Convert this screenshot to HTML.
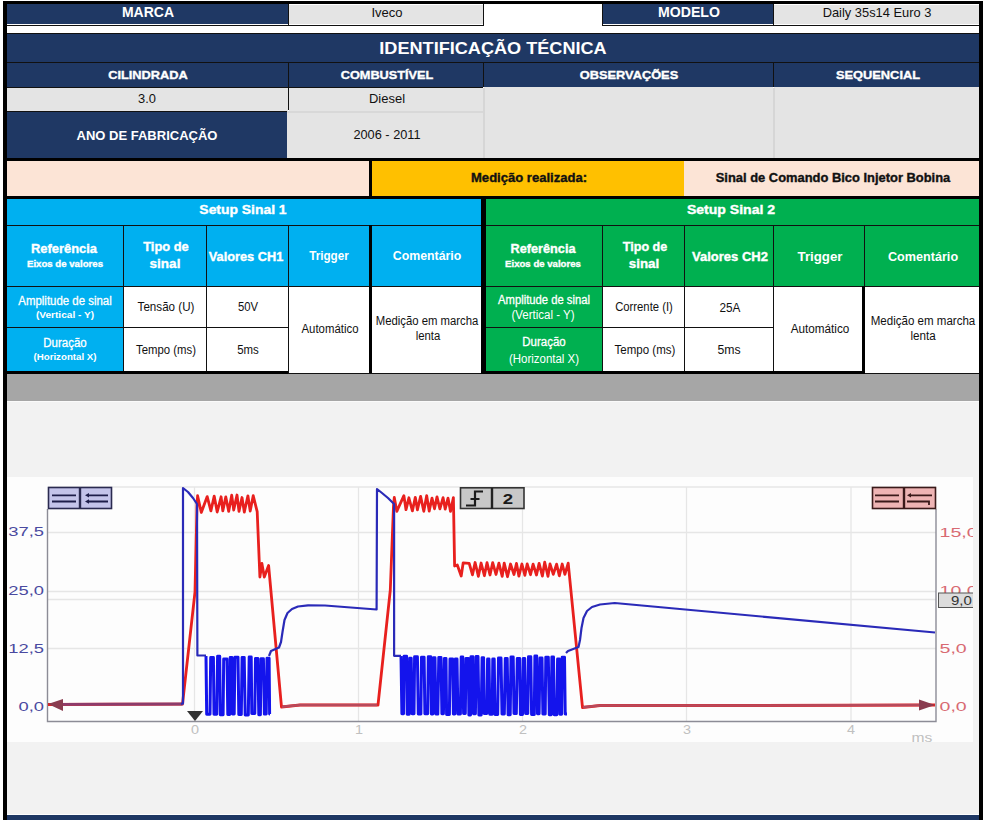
<!DOCTYPE html>
<html><head><meta charset="utf-8">
<style>
*{margin:0;padding:0;box-sizing:border-box}
html,body{width:983px;height:820px;overflow:hidden;background:#fff}
body{position:relative;font-family:"Liberation Sans",sans-serif}
.a{position:absolute}
.t{position:absolute;width:400px;text-align:center;white-space:nowrap}
</style></head><body>
<div class="a" style="left:3px;top:1px;width:980px;height:3px;background:#000"></div>
<div class="a" style="left:3px;top:1px;width:4px;height:819px;background:#000"></div>
<div class="a" style="left:979px;top:1px;width:4px;height:819px;background:#000"></div>
<div class="a" style="left:7px;top:4px;width:281px;height:20px;background:#1f3864"></div>
<div class="a" style="left:289px;top:5px;width:194px;height:19px;background:#e4e4e4"></div>
<div class="a" style="left:603px;top:4px;width:170px;height:20px;background:#1f3864"></div>
<div class="a" style="left:774px;top:5px;width:205px;height:19px;background:#e4e4e4"></div>
<div class="a" style="left:288px;top:4px;width:1px;height:22px;background:#111"></div>
<div class="a" style="left:483px;top:4px;width:1px;height:22px;background:#111"></div>
<div class="a" style="left:602px;top:4px;width:1px;height:22px;background:#111"></div>
<div class="a" style="left:773px;top:4px;width:1px;height:22px;background:#111"></div>
<div class="a" style="left:7px;top:25px;width:476px;height:1px;background:#111"></div>
<div class="a" style="left:602px;top:25px;width:377px;height:1px;background:#111"></div>
<div class="a" style="left:7px;top:33px;width:972px;height:1px;background:#111"></div>
<div class="a" style="left:7px;top:34px;width:972px;height:28px;background:#1f3864"></div>
<div class="a" style="left:7px;top:62px;width:972px;height:1px;background:#111"></div>
<div class="a" style="left:7px;top:63px;width:972px;height:24px;background:#1f3864"></div>
<div class="a" style="left:288px;top:62px;width:1px;height:48px;background:#111"></div>
<div class="a" style="left:483px;top:62px;width:1px;height:25px;background:#111"></div>
<div class="a" style="left:773px;top:62px;width:1px;height:25px;background:#111"></div>
<div class="a" style="left:7px;top:87px;width:476px;height:1px;background:#111"></div>
<div class="a" style="left:7px;top:88px;width:281px;height:23px;background:#e4e4e4"></div>
<div class="a" style="left:289px;top:88px;width:194px;height:23px;background:#e4e4e4"></div>
<div class="a" style="left:7px;top:111px;width:281px;height:1px;background:#111"></div>
<div class="a" style="left:7px;top:112px;width:280px;height:46px;background:#1f3864"></div>
<div class="a" style="left:287px;top:112px;width:196px;height:46px;background:#e4e4e4"></div>
<div class="a" style="left:484px;top:87px;width:289px;height:71px;background:#e4e4e4"></div>
<div class="a" style="left:774px;top:87px;width:205px;height:71px;background:#e4e4e4"></div>
<div class="a" style="left:483px;top:88px;width:2px;height:70px;background:#d6d6d6"></div>
<div class="a" style="left:773px;top:88px;width:2px;height:70px;background:#d6d6d6"></div>
<div class="a" style="left:287px;top:111px;width:196px;height:2px;background:#d8d8d8"></div>
<div class="a" style="left:7px;top:158px;width:972px;height:3px;background:#000"></div>
<div class="a" style="left:7px;top:161px;width:362px;height:35px;background:#fce4d6"></div>
<div class="a" style="left:369px;top:161px;width:3px;height:35px;background:#000"></div>
<div class="a" style="left:372px;top:161px;width:312px;height:35px;background:#ffc000"></div>
<div class="a" style="left:684px;top:161px;width:295px;height:35px;background:#fce4d6"></div>
<div class="a" style="left:7px;top:196px;width:972px;height:3px;background:#000"></div>
<div class="a" style="left:7px;top:199px;width:474px;height:88px;background:#00b0f0"></div>
<div class="a" style="left:486px;top:199px;width:493px;height:88px;background:#00b050"></div>
<div class="a" style="left:481px;top:196px;width:5px;height:178px;background:#000"></div>
<div class="a" style="left:7px;top:225px;width:474px;height:1px;background:#111"></div>
<div class="a" style="left:486px;top:225px;width:493px;height:1px;background:#111"></div>
<div class="a" style="left:7px;top:286px;width:474px;height:1px;background:#111"></div>
<div class="a" style="left:486px;top:286px;width:493px;height:1px;background:#111"></div>
<div class="a" style="left:7px;top:287px;width:116px;height:84px;background:#00b0f0"></div>
<div class="a" style="left:124px;top:287px;width:245px;height:86px;background:#fff"></div>
<div class="a" style="left:372px;top:287px;width:109px;height:86px;background:#fff"></div>
<div class="a" style="left:123px;top:225px;width:1px;height:148px;background:#111"></div>
<div class="a" style="left:206px;top:225px;width:1px;height:148px;background:#111"></div>
<div class="a" style="left:288px;top:225px;width:1px;height:148px;background:#111"></div>
<div class="a" style="left:369px;top:225px;width:3px;height:149px;background:#000"></div>
<div class="a" style="left:7px;top:327px;width:281px;height:1px;background:#111"></div>
<div class="a" style="left:7px;top:371px;width:281px;height:3px;background:#000"></div>
<div class="a" style="left:288px;top:373px;width:193px;height:1px;background:#111"></div>
<div class="a" style="left:486px;top:287px;width:116px;height:84px;background:#00b050"></div>
<div class="a" style="left:603px;top:287px;width:376px;height:86px;background:#fff"></div>
<div class="a" style="left:602px;top:225px;width:1px;height:148px;background:#111"></div>
<div class="a" style="left:684px;top:225px;width:1px;height:148px;background:#111"></div>
<div class="a" style="left:773px;top:225px;width:1px;height:148px;background:#111"></div>
<div class="a" style="left:864px;top:225px;width:1px;height:62px;background:#111"></div>
<div class="a" style="left:862px;top:286px;width:3px;height:88px;background:#000"></div>
<div class="a" style="left:486px;top:327px;width:287px;height:1px;background:#111"></div>
<div class="a" style="left:486px;top:371px;width:379px;height:3px;background:#000"></div>
<div class="a" style="left:865px;top:373px;width:114px;height:1px;background:#111"></div>
<div class="a" style="left:7px;top:374px;width:972px;height:27px;background:#a6a6a6"></div>
<div class="a" style="left:7px;top:401px;width:972px;height:413px;background:#f2f2f2"></div>
<div class="a" style="left:7px;top:401px;width:972px;height:1px;background:#fafafa"></div>
<div class="a" style="left:7px;top:814px;width:972px;height:1px;background:#fff"></div>
<div class="a" style="left:7px;top:815px;width:972px;height:5px;background:#1f3864"></div>
<svg class="a" style="left:0;top:0" width="983" height="820">
<rect x="7" y="477" width="966" height="265" fill="#fdfdfd"/>
<line x1="48" y1="487" x2="936" y2="487" stroke="#e6e6e6" stroke-width="1.3"/>
<line x1="48" y1="532.5" x2="936" y2="532.5" stroke="#e6e6e6" stroke-width="1.3"/>
<line x1="48" y1="591.5" x2="936" y2="591.5" stroke="#e6e6e6" stroke-width="1.3"/>
<line x1="48" y1="599.5" x2="936" y2="599.5" stroke="#e6e6e6" stroke-width="1.3"/>
<line x1="48" y1="648.5" x2="936" y2="648.5" stroke="#e6e6e6" stroke-width="1.3"/>
<line x1="194.5" y1="487" x2="194.5" y2="721" stroke="#e6e6e6" stroke-width="1.3"/>
<line x1="358.5" y1="487" x2="358.5" y2="721" stroke="#e6e6e6" stroke-width="1.3"/>
<line x1="522.5" y1="487" x2="522.5" y2="721" stroke="#e6e6e6" stroke-width="1.3"/>
<line x1="686.5" y1="487" x2="686.5" y2="721" stroke="#e6e6e6" stroke-width="1.3"/>
<line x1="851" y1="487" x2="851" y2="721" stroke="#e6e6e6" stroke-width="1.3"/>
<path d="M47.5,509 V721.5 H936 V509" fill="none" stroke="#8c8c96" stroke-width="1.4"/>
<text x="0" y="0" transform="translate(44,536) scale(1.36,1)" fill="#4a4aa0" font-family="Liberation Sans" font-size="13.5" font-weight="normal" text-anchor="end">37,5</text>
<text x="0" y="0" transform="translate(44,594.5) scale(1.36,1)" fill="#4a4aa0" font-family="Liberation Sans" font-size="13.5" font-weight="normal" text-anchor="end">25,0</text>
<text x="0" y="0" transform="translate(44,653) scale(1.36,1)" fill="#4a4aa0" font-family="Liberation Sans" font-size="13.5" font-weight="normal" text-anchor="end">12,5</text>
<text x="0" y="0" transform="translate(44,711.3) scale(1.36,1)" fill="#4a4aa0" font-family="Liberation Sans" font-size="13.5" font-weight="normal" text-anchor="end">0,0</text>
<text x="0" y="0" transform="translate(939.5,536.5) scale(1.45,1)" fill="#d86a72" font-family="Liberation Sans" font-size="13.5" font-weight="normal" text-anchor="start">15,0</text>
<text x="0" y="0" transform="translate(939.5,595) scale(1.45,1)" fill="#d86a72" font-family="Liberation Sans" font-size="13.5" font-weight="normal" text-anchor="start">10,0</text>
<text x="0" y="0" transform="translate(939.5,653) scale(1.45,1)" fill="#d86a72" font-family="Liberation Sans" font-size="13.5" font-weight="normal" text-anchor="start">5,0</text>
<text x="0" y="0" transform="translate(939.5,711) scale(1.45,1)" fill="#d86a72" font-family="Liberation Sans" font-size="13.5" font-weight="normal" text-anchor="start">0,0</text>
<rect x="938.5" y="593" width="40" height="14.5" fill="#dcdcdc" stroke="#555" stroke-width="1"/>
<text x="0" y="0" transform="translate(951,605) scale(1.2,1)" fill="#333" font-family="Liberation Sans" font-size="12.5" font-weight="normal" text-anchor="start">9,0</text>
<text x="0" y="0" transform="translate(195,734) scale(1.2,1)" fill="#c0c0c0" font-family="Liberation Sans" font-size="12" font-weight="normal" text-anchor="middle">0</text>
<text x="0" y="0" transform="translate(359,734) scale(1.2,1)" fill="#c0c0c0" font-family="Liberation Sans" font-size="12" font-weight="normal" text-anchor="middle">1</text>
<text x="0" y="0" transform="translate(523,734) scale(1.2,1)" fill="#c0c0c0" font-family="Liberation Sans" font-size="12" font-weight="normal" text-anchor="middle">2</text>
<text x="0" y="0" transform="translate(687,734) scale(1.2,1)" fill="#c0c0c0" font-family="Liberation Sans" font-size="12" font-weight="normal" text-anchor="middle">3</text>
<text x="0" y="0" transform="translate(851,734) scale(1.2,1)" fill="#c0c0c0" font-family="Liberation Sans" font-size="12" font-weight="normal" text-anchor="middle">4</text>
<text x="0" y="0" transform="translate(922,742) scale(1.3,1)" fill="#c0c0c0" font-family="Liberation Sans" font-size="12" font-weight="normal" text-anchor="middle">ms</text>
<rect x="48.5" y="487.5" width="63" height="21" fill="#c4c4ea" stroke="#2a2a50" stroke-width="1.6"/>
<line x1="80.0" y1="487" x2="80.0" y2="509" stroke="#2a2a50" stroke-width="2.4"/>
<path d="M52,495.3 H76 M52,501.5 H76 M88,495.3 H108 M88,501.5 H108" stroke="#1e1e4a" stroke-width="1.8"/>
<path d="M85,495.3 L89,493 V497.6 Z M85,501.5 L89,499.2 V503.8 Z" fill="#1e1e4a"/>
<rect x="872.5" y="487.5" width="63" height="21" fill="#eeb4b4" stroke="#3a1a1a" stroke-width="1.6"/>
<line x1="904.0" y1="487" x2="904.0" y2="509" stroke="#3a1a1a" stroke-width="2.4"/>
<path d="M875,495.3 H899 M875,501.5 H899 M910,495.3 H932 M907,501.5 H929 V505" stroke="#3a1a1a" stroke-width="1.8" fill="none"/>
<path d="M907,495.3 L911,493 V497.6 Z" fill="#3a1a1a"/>
<rect x="460.5" y="487.8" width="63.5" height="20.7" fill="#c8c8c8" stroke="#333" stroke-width="1.6"/>
<line x1="492" y1="488" x2="492" y2="509" stroke="#222" stroke-width="2.4"/>
<path d="M466,505.5 H475 V491.5 H483 M470.5,499 H479.5" stroke="#1a1a1a" stroke-width="2.2" fill="none"/>
<text x="0" y="0" transform="translate(507.8,504.3) scale(1.2,1)" fill="#1a1a1a" font-family="Liberation Sans" font-size="15.5" font-weight="bold" text-anchor="middle">2</text>
<path d="M187,711 H203 L195,721 Z" fill="#333"/>
<polyline points="48.0,704.5 182.5,704.0 195.0,592.0 197.0,505.0 197.6,495.7 201.3,512.5 207.2,496.6 210.9,510.9 214.2,496.1 217.2,512.0 221.1,496.8 222.8,510.9 225.8,496.9 228.7,511.4 231.7,495.2 233.7,510.0 237.0,495.0 239.0,511.4 242.0,497.5 244.3,512.1 247.9,495.8 250.2,511.1 253.2,495.7 257.2,511.7 259.9,577.0 261.9,563.5 264.3,577.0 268.6,565.5 281.5,707.0 300.0,705.0 378.0,705.0 390.3,590.0 393.5,506.0 394.3,497.5 396.8,511.3 403.9,495.7 406.0,509.7 408.9,497.8 412.4,510.9 415.3,497.3 417.4,509.8 420.6,496.4 423.8,511.3 426.7,495.6 429.2,511.1 432.0,498.1 434.5,508.8 437.0,496.9 439.9,508.9 443.1,497.7 445.2,509.2 448.0,498.1 450.5,511.4 453.4,497.6 454.6,566.0 457.3,565.0 461.2,576.0 463.2,562.8 469.2,563.3 472.5,574.8 475.1,562.5 478.4,576.3 481.1,563.0 484.4,575.7 487.0,562.7 490.0,575.0 492.7,562.6 496.0,574.5 498.9,563.2 502.2,576.3 504.2,563.2 507.5,576.7 510.5,564.0 514.0,574.5 516.5,563.4 518.9,576.2 521.9,564.0 524.9,575.3 527.2,563.9 530.5,574.7 533.1,564.2 536.5,575.0 539.1,563.4 542.4,576.1 544.7,562.2 548.0,576.4 550.0,563.9 553.3,574.4 556.6,564.1 559.3,575.8 562.2,564.0 564.9,574.4 568.2,563.2 582.5,707.5 600.0,705.5 760.0,705.5 935.0,705.0" fill="none" stroke="#e8201e" stroke-width="2.8" stroke-linejoin="round"/>
<polyline points="63,704.3 182.5,704" fill="none" stroke="#8c3c6c" stroke-width="2.8"/>
<polyline points="282,706.8 300,705 377,705" fill="none" stroke="#b84a5c" stroke-width="2.6"/>
<polyline points="583,707.2 600,705.5 760,705.5 920,705" fill="none" stroke="#b84a5c" stroke-width="2.6"/>
<polyline points="206.0,656.0 206.7,714.3 210.0,714.3 210.7,657.5 213.4,657.5 214.0,714.3 216.7,714.3 217.6,656.3 219.7,656.3 220.3,714.7 223.1,714.7 223.7,658.9 227.0,658.9 227.8,714.4 229.7,714.4 230.2,657.6 231.9,657.6 232.5,713.9 234.2,713.9 234.9,657.3 238.0,657.3 238.8,714.5 241.3,714.5 242.1,657.4 244.2,657.4 245.2,715.0 248.3,715.0 249.2,656.9 251.2,656.9 251.8,713.6 254.8,713.6 255.5,658.5 257.8,658.5 258.8,714.8 260.4,714.8 261.0,658.7 263.4,658.7 264.4,714.1 266.2,714.1 267.0,658.3 269.1,658.3 269.6,714.0 270.0,714.0" fill="none" stroke="#1414ec" stroke-width="3.0" stroke-linejoin="round"/>
<polyline points="401.0,656.0 401.9,713.7 403.5,713.7 404.1,656.2 406.6,656.2 407.2,714.3 409.2,714.3 409.7,658.2 411.2,658.2 412.1,713.7 414.0,713.7 414.6,656.8 417.4,656.8 418.3,714.0 420.9,714.0 421.5,657.2 424.1,657.2 424.9,713.7 427.7,713.7 428.3,656.8 430.7,656.8 431.4,713.9 432.8,713.9 433.4,657.7 435.0,657.7 435.8,714.1 437.8,714.1 438.8,657.5 441.0,657.5 441.9,713.8 443.4,713.8 444.4,658.5 446.0,658.5 446.6,714.6 449.4,714.6 450.0,658.9 452.6,658.9 453.4,714.1 454.8,714.1 455.4,658.9 457.0,658.9 457.9,713.9 460.4,713.9 461.2,656.9 462.8,656.9 463.6,713.6 465.3,713.6 466.0,658.6 468.3,658.6 468.9,714.9 470.5,714.9 471.0,656.8 473.0,656.8 473.5,713.8 475.4,713.8 476.2,656.4 478.0,656.4 478.9,715.0 481.2,715.0 482.1,657.8 483.6,657.8 484.1,713.5 486.8,713.5 487.6,658.9 489.0,658.9 489.8,714.2 492.2,714.2 492.8,659.0 494.2,659.0 495.0,714.6 497.7,714.6 498.5,658.1 501.0,658.1 502.0,714.0 504.3,714.0 505.3,658.6 507.2,658.6 508.1,714.8 510.2,714.8 511.0,657.1 513.2,657.1 514.0,713.6 516.3,713.6 517.3,658.6 519.7,658.6 520.4,714.6 522.5,714.6 523.3,658.5 524.7,658.5 525.6,713.5 527.8,713.5 528.5,656.7 530.8,656.7 531.6,714.4 534.3,714.4 534.9,656.0 536.7,656.0 537.5,713.8 539.1,713.8 540.0,658.0 542.0,658.0 542.9,714.0 545.2,714.0 545.8,657.3 548.3,657.3 549.3,714.8 551.2,714.8 551.9,656.9 553.5,656.9 554.2,714.8 556.8,714.8 557.6,658.9 559.3,658.9 559.9,714.2 561.6,714.2 562.2,657.2 564.5,657.2 565.2,714.0 567.0,714.0" fill="none" stroke="#1414ec" stroke-width="3.0" stroke-linejoin="round"/>
<polyline points="181.0,703.8 183.0,703.5 183.0,488.0 188.0,492.0 193.0,498.0 197.0,504.0 197.4,655.5 206.0,655.5" fill="none" stroke="#2a2ab8" stroke-width="2.2" stroke-linejoin="round"/>
<polyline points="269.0,656.0 271.0,651.0 279.0,647.5 281.0,642.0 282.5,632.0 284.5,620.0 287.5,613.0 292.0,609.0 298.0,606.5 308.0,605.3 325.0,605.5 376.6,609.5 377.0,489.0 382.0,493.0 388.0,498.0 394.1,504.0 394.1,655.8 401.0,655.8" fill="none" stroke="#2a2ab8" stroke-width="2.2" stroke-linejoin="round"/>
<polyline points="566.0,653.0 568.0,651.0 578.5,647.0 580.0,640.0 581.5,628.0 583.5,618.0 587.0,611.0 592.0,607.0 600.0,604.5 614.7,603.0 935.0,632.5" fill="none" stroke="#2a2ab8" stroke-width="2.2" stroke-linejoin="round"/>
<path d="M48,704 L63,699 V711 Z" fill="#8a3c50"/>
<path d="M935,705 L919,699.5 V710.5 Z" fill="#8a3c50"/>
<rect x="973" y="470" width="6" height="280" fill="#f2f2f2"/>
</svg><div class="t" style="left:-52.26px;top:5.25px;font-size:14px;line-height:14px;letter-spacing:0.000px;transform:scaleX(0.9985);color:#ffffff;font-weight:bold">MARCA</div>
<div class="t" style="left:187.24px;top:6.92px;font-size:12.5px;line-height:12.5px;letter-spacing:0.000px;transform:scaleX(1.0432);color:#111111;font-weight:normal">Iveco</div>
<div class="t" style="left:488.78px;top:4.95px;font-size:14px;line-height:14px;letter-spacing:0.000px;transform:scaleX(1.0077);color:#ffffff;font-weight:bold">MODELO</div>
<div class="t" style="left:676.50px;top:6.76px;font-size:12.8px;line-height:12.8px;letter-spacing:0.000px;transform:scaleX(1.0051);color:#111111;font-weight:normal">Daily 35s14 Euro 3</div>
<div class="t" style="left:293.29px;top:39.61px;font-size:17px;line-height:17px;letter-spacing:0.000px;transform:scaleX(1.0650);color:#ffffff;font-weight:bold">IDENTIFICAÇÃO TÉCNICA</div>
<div class="t" style="left:-52.48px;top:69.87px;font-size:11.5px;line-height:11.5px;letter-spacing:0.000px;transform:scaleX(1.1129);-webkit-text-stroke:0.35px currentColor;color:#ffffff;font-weight:bold">CILINDRADA</div>
<div class="t" style="left:187.46px;top:69.87px;font-size:11.5px;line-height:11.5px;letter-spacing:0.000px;transform:scaleX(1.1053);-webkit-text-stroke:0.35px currentColor;color:#ffffff;font-weight:bold">COMBUSTÍVEL</div>
<div class="t" style="left:429.49px;top:69.77px;font-size:11.5px;line-height:11.5px;letter-spacing:0.000px;transform:scaleX(1.1128);-webkit-text-stroke:0.35px currentColor;color:#ffffff;font-weight:bold">OBSERVAÇÕES</div>
<div class="t" style="left:678.48px;top:69.87px;font-size:11.5px;line-height:11.5px;letter-spacing:0.000px;transform:scaleX(1.1156);-webkit-text-stroke:0.35px currentColor;color:#ffffff;font-weight:bold">SEQUENCIAL</div>
<div class="t" style="left:-52.71px;top:92.92px;font-size:12.5px;line-height:12.5px;letter-spacing:0.000px;transform:scaleX(1.0290);color:#111111;font-weight:normal">3.0</div>
<div class="t" style="left:186.53px;top:92.82px;font-size:12.5px;line-height:12.5px;letter-spacing:0.000px;transform:scaleX(1.0377);color:#111111;font-weight:normal">Diesel</div>
<div class="t" style="left:-53.23px;top:129.10px;font-size:13px;line-height:13px;letter-spacing:0.000px;transform:scaleX(1.0007);color:#ffffff;font-weight:bold">ANO DE FABRICAÇÃO</div>
<div class="t" style="left:186.76px;top:128.92px;font-size:12.5px;line-height:12.5px;letter-spacing:0.000px;transform:scaleX(1.0209);color:#111111;font-weight:normal">2006 - 2011</div>
<div class="t" style="left:328.71px;top:171.64px;font-size:12px;line-height:12px;letter-spacing:0.000px;transform:scaleX(1.0868);-webkit-text-stroke:0.35px currentColor;color:#111111;font-weight:bold">Medição realizada:</div>
<div class="t" style="left:632.81px;top:172.04px;font-size:12px;line-height:12px;letter-spacing:0.000px;transform:scaleX(1.0756);-webkit-text-stroke:0.35px currentColor;color:#111111;font-weight:bold">Sinal de Comando Bico Injetor Bobina</div>
<div class="t" style="left:43.24px;top:203.54px;font-size:12px;line-height:12px;letter-spacing:0.000px;transform:scaleX(1.1576);-webkit-text-stroke:0.35px currentColor;color:#ffffff;font-weight:bold">Setup Sinal 1</div>
<div class="t" style="left:531.03px;top:203.54px;font-size:12px;line-height:12px;letter-spacing:0.000px;transform:scaleX(1.1703);-webkit-text-stroke:0.35px currentColor;color:#ffffff;font-weight:bold">Setup Sinal 2</div>
<div class="t" style="left:-136.13px;top:243.22px;font-size:12.5px;line-height:12.5px;letter-spacing:0.000px;transform:scaleX(1.0332);-webkit-text-stroke:0.35px currentColor;color:#ffffff;font-weight:bold">Referência</div>
<div class="t" style="left:-134.75px;top:259.16px;font-size:9.5px;line-height:9.5px;letter-spacing:0.000px;transform:scaleX(1.0135);-webkit-text-stroke:0.35px currentColor;color:#ffffff;font-weight:bold">Eixos de valores</div>
<div class="t" style="left:-34.03px;top:241.22px;font-size:12.5px;line-height:12.5px;letter-spacing:0.000px;transform:scaleX(1.0296);-webkit-text-stroke:0.35px currentColor;color:#ffffff;font-weight:bold">Tipo de</div>
<div class="t" style="left:-34.97px;top:257.72px;font-size:12.5px;line-height:12.5px;letter-spacing:0.000px;transform:scaleX(1.0825);-webkit-text-stroke:0.35px currentColor;color:#ffffff;font-weight:bold">sinal</div>
<div class="t" style="left:46.33px;top:250.84px;font-size:12px;line-height:12px;letter-spacing:0.000px;transform:scaleX(1.0633);-webkit-text-stroke:0.35px currentColor;color:#ffffff;font-weight:bold">Valores CH1</div>
<div class="t" style="left:129.24px;top:250.42px;font-size:12.5px;line-height:12.5px;letter-spacing:0.000px;transform:scaleX(0.9339);color:#ffffff;font-weight:bold">Trigger</div>
<div class="t" style="left:227.26px;top:250.42px;font-size:12.5px;line-height:12.5px;letter-spacing:0.000px;transform:scaleX(0.9858);color:#ffffff;font-weight:bold">Comentário</div>
<div class="t" style="left:342.83px;top:243.02px;font-size:12.5px;line-height:12.5px;letter-spacing:0.000px;transform:scaleX(1.0164);-webkit-text-stroke:0.35px currentColor;color:#ffffff;font-weight:bold">Referência</div>
<div class="t" style="left:342.83px;top:258.86px;font-size:9.5px;line-height:9.5px;letter-spacing:0.000px;transform:scaleX(1.0109);-webkit-text-stroke:0.35px currentColor;color:#ffffff;font-weight:bold">Eixos de valores</div>
<div class="t" style="left:444.92px;top:241.32px;font-size:12.5px;line-height:12.5px;letter-spacing:0.000px;transform:scaleX(1.0045);-webkit-text-stroke:0.35px currentColor;color:#ffffff;font-weight:bold">Tipo de</div>
<div class="t" style="left:444.02px;top:257.92px;font-size:12.5px;line-height:12.5px;letter-spacing:0.000px;transform:scaleX(1.0681);-webkit-text-stroke:0.35px currentColor;color:#ffffff;font-weight:bold">sinal</div>
<div class="t" style="left:529.53px;top:251.24px;font-size:12px;line-height:12px;letter-spacing:0.000px;transform:scaleX(1.0823);-webkit-text-stroke:0.35px currentColor;color:#ffffff;font-weight:bold">Valores CH2</div>
<div class="t" style="left:619.72px;top:250.62px;font-size:12.5px;line-height:12.5px;letter-spacing:0.000px;transform:scaleX(1.0619);color:#ffffff;font-weight:bold">Trigger</div>
<div class="t" style="left:722.97px;top:250.62px;font-size:12.5px;line-height:12.5px;letter-spacing:0.000px;transform:scaleX(1.0110);color:#ffffff;font-weight:bold">Comentário</div>
<div class="t" style="left:-134.97px;top:294.84px;font-size:12px;line-height:12px;letter-spacing:0.000px;transform:scaleX(0.9525);-webkit-text-stroke:0.3px currentColor;color:#ffffff;font-weight:normal">Amplitude de sinal</div>
<div class="t" style="left:-135.21px;top:310.58px;font-size:9px;line-height:9px;letter-spacing:0.000px;transform:scaleX(1.1220);color:#ffffff;font-weight:bold">(Vertical - Y)</div>
<div class="t" style="left:-135.20px;top:337.44px;font-size:12px;line-height:12px;letter-spacing:0.000px;transform:scaleX(0.9574);-webkit-text-stroke:0.3px currentColor;color:#ffffff;font-weight:normal">Duração</div>
<div class="t" style="left:-135.00px;top:353.38px;font-size:9px;line-height:9px;letter-spacing:0.000px;transform:scaleX(1.0777);color:#ffffff;font-weight:bold">(Horizontal X)</div>
<div class="t" style="left:-33.83px;top:301.04px;font-size:12px;line-height:12px;letter-spacing:0.000px;transform:scaleX(0.9682);color:#111111;font-weight:normal">Tensão (U)</div>
<div class="t" style="left:47.97px;top:300.84px;font-size:12px;line-height:12px;letter-spacing:0.000px;transform:scaleX(0.9410);color:#111111;font-weight:normal">50V</div>
<div class="t" style="left:-34.03px;top:343.64px;font-size:12px;line-height:12px;letter-spacing:0.000px;transform:scaleX(0.9459);color:#111111;font-weight:normal">Tempo (ms)</div>
<div class="t" style="left:47.52px;top:343.84px;font-size:12px;line-height:12px;letter-spacing:0.000px;transform:scaleX(0.9527);color:#111111;font-weight:normal">5ms</div>
<div class="t" style="left:130.22px;top:322.74px;font-size:12px;line-height:12px;letter-spacing:0.000px;transform:scaleX(0.9486);color:#111111;font-weight:normal">Automático</div>
<div class="t" style="left:227.29px;top:314.94px;font-size:12px;line-height:12px;letter-spacing:0.000px;transform:scaleX(0.9439);color:#111111;font-weight:normal">Medição em marcha</div>
<div class="t" style="left:227.53px;top:329.64px;font-size:12px;line-height:12px;letter-spacing:0.000px;transform:scaleX(0.9454);color:#111111;font-weight:normal">lenta</div>
<div class="t" style="left:344.18px;top:294.04px;font-size:12px;line-height:12px;letter-spacing:0.000px;transform:scaleX(0.9367);-webkit-text-stroke:0.3px currentColor;color:#ffffff;font-weight:normal">Amplitude de sinal</div>
<div class="t" style="left:343.28px;top:308.54px;font-size:12px;line-height:12px;letter-spacing:0.000px;transform:scaleX(0.9604);color:#ffffff;font-weight:normal">(Vertical - Y)</div>
<div class="t" style="left:344.04px;top:336.34px;font-size:12px;line-height:12px;letter-spacing:0.000px;transform:scaleX(0.9595);-webkit-text-stroke:0.3px currentColor;color:#ffffff;font-weight:normal">Duração</div>
<div class="t" style="left:344.18px;top:352.54px;font-size:12px;line-height:12px;letter-spacing:0.000px;transform:scaleX(0.9570);color:#ffffff;font-weight:normal">(Horizontal X)</div>
<div class="t" style="left:443.76px;top:301.04px;font-size:12px;line-height:12px;letter-spacing:0.000px;transform:scaleX(0.9396);color:#111111;font-weight:normal">Corrente (I)</div>
<div class="t" style="left:444.50px;top:344.24px;font-size:12px;line-height:12px;letter-spacing:0.000px;transform:scaleX(0.9602);color:#111111;font-weight:normal">Tempo (ms)</div>
<div class="t" style="left:530.25px;top:301.84px;font-size:12px;line-height:12px;letter-spacing:0.000px;transform:scaleX(0.9811);color:#111111;font-weight:normal">25A</div>
<div class="t" style="left:529.30px;top:344.14px;font-size:12px;line-height:12px;letter-spacing:0.000px;transform:scaleX(1.0220);color:#111111;font-weight:normal">5ms</div>
<div class="t" style="left:619.74px;top:323.44px;font-size:12px;line-height:12px;letter-spacing:0.000px;transform:scaleX(0.9777);color:#111111;font-weight:normal">Automático</div>
<div class="t" style="left:723.02px;top:315.44px;font-size:12px;line-height:12px;letter-spacing:0.000px;transform:scaleX(0.9618);color:#111111;font-weight:normal">Medição em marcha</div>
<div class="t" style="left:722.80px;top:329.64px;font-size:12px;line-height:12px;letter-spacing:0.000px;transform:scaleX(0.9698);color:#111111;font-weight:normal">lenta</div>
</body></html>
